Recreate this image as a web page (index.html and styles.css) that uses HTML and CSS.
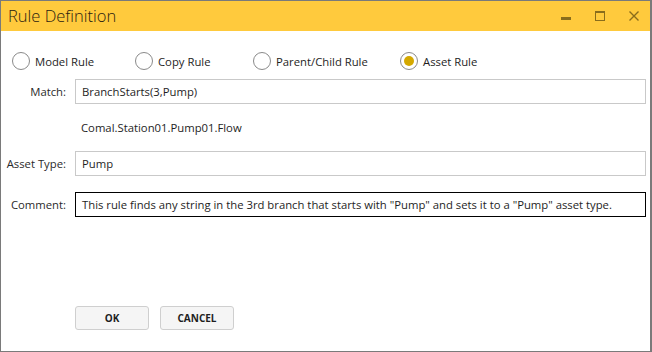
FILE: index.html
```html
<!DOCTYPE html>
<html>
  <head>
    <title>Rule Definition</title>
    <link rel="stylesheet" href="styles.css">
  </head>
  <body>
    <div class="window">
      <div class="titlebar">
        <div class="title">Rule Definition</div>
        <div class="controls">
          <svg class="ctl" width="12" height="12" viewBox="0 0 12 12"><rect x="1" y="7" width="10" height="3" fill="#8a6d1c"/></svg>
          <svg class="ctl" width="12" height="12" viewBox="0 0 12 12"><rect x="1.5" y="1.5" width="9" height="9" fill="none" stroke="#8a6d1c"/><rect x="1" y="1" width="10" height="2" fill="#8a6d1c"/></svg>
          <svg class="ctl" width="12" height="12" viewBox="0 0 12 12"><path d="M1.5 1.5 L10.5 10.5 M10.5 1.5 L1.5 10.5" stroke="#8a6d1c" stroke-width="1.4"/></svg>
        </div>
      </div>

      <div class="content">
        <div class="radios">
          <label class="radio"><span class="dot"></span>Model Rule</label>
          <label class="radio"><span class="dot"></span>Copy Rule</label>
          <label class="radio"><span class="dot"></span>Parent/Child Rule</label>
          <label class="radio"><span class="dot checked"></span>Asset Rule</label>
        </div>

        <div class="form">
          <div class="label">Match:</div>
          <div class="field">BranchStarts(3,Pump)</div>

          <div></div>
          <div class="info">Comal.Station01.Pump01.Flow</div>

          <div class="label">Asset Type:</div>
          <div class="field">Pump</div>

          <div class="label comment-label">Comment:</div>
          <div class="field comment">This rule finds any string in the 3rd branch that starts with "Pump" and sets it to a "Pump" asset type.</div>
        </div>

        <div class="buttons">
          <button class="btn">OK</button>
          <button class="btn">CANCEL</button>
        </div>
      </div>
    </div>
  </body>
</html>
```

FILE: styles.css
```css
html, body {
  margin: 0;
  padding: 0;
}

body {
  width: 652px;
  height: 352px;
  font-family: "Open Sans", "Noto Sans", sans-serif;
  font-size: 11.3px;
  color: #1e1e1e;
  background: #ffffff;
}

.window {
  box-sizing: border-box;
  width: 652px;
  height: 352px;
  border: 1px solid #7a7a7a;
  border-right-width: 2px;
  display: flex;
  flex-direction: column;
}

.titlebar {
  height: 30px;
  background: #ffca3d;
  display: flex;
  align-items: center;
  justify-content: space-between;
  padding-left: 7px;
}

.title {
  font-size: 16.5px;
  font-weight: 300;
  color: #2a2110;
  margin-top: -2px;
}

.controls {
  display: flex;
  gap: 22px;
  padding-right: 10px;
}

.content {
  flex: 1;
  display: flex;
  flex-direction: column;
}

.radios {
  display: grid;
  grid-template-columns: 123px 118px 147px auto;
  margin: 21px 0 0 11px;
  height: 17px;
}

.radio {
  display: flex;
  align-items: center;
  gap: 5px;
}

.dot {
  box-sizing: border-box;
  width: 18px;
  height: 18px;
  border: 1px solid #8a8a8a;
  border-radius: 50%;
  display: flex;
  align-items: center;
  justify-content: center;
}

.dot.checked::after {
  content: "";
  width: 10px;
  height: 10px;
  border-radius: 50%;
  background: #d4a800;
}

.form {
  display: grid;
  grid-template-columns: 65px 571px;
  grid-template-rows: 25px 47px 25px 41px;
  column-gap: 9px;
  margin-top: 10px;
}

.label {
  text-align: right;
  align-self: center;
  color: #2a2a2a;
}

.field {
  box-sizing: border-box;
  height: 25px;
  border: 1px solid #c9c9c9;
  display: flex;
  align-items: center;
  padding-left: 6px;
  white-space: nowrap;
}

.info {
  align-self: center;
  padding-left: 6px;
}

.comment-label {
  align-self: end;
  line-height: 25px;
}

.comment {
  align-self: end;
  border-color: #000000;
}

.buttons {
  display: flex;
  gap: 11px;
  margin: 89px 0 0 74px;
}

.btn {
  width: 74px;
  height: 24px;
  border: 1px solid #cfcfcf;
  border-radius: 3px;
  background: #f5f5f5;
  font-family: "Open Sans", "Noto Sans", sans-serif;
  font-size: 10px;
  font-weight: bold;
  color: #1e1e1e;
  padding: 0;
}
```
